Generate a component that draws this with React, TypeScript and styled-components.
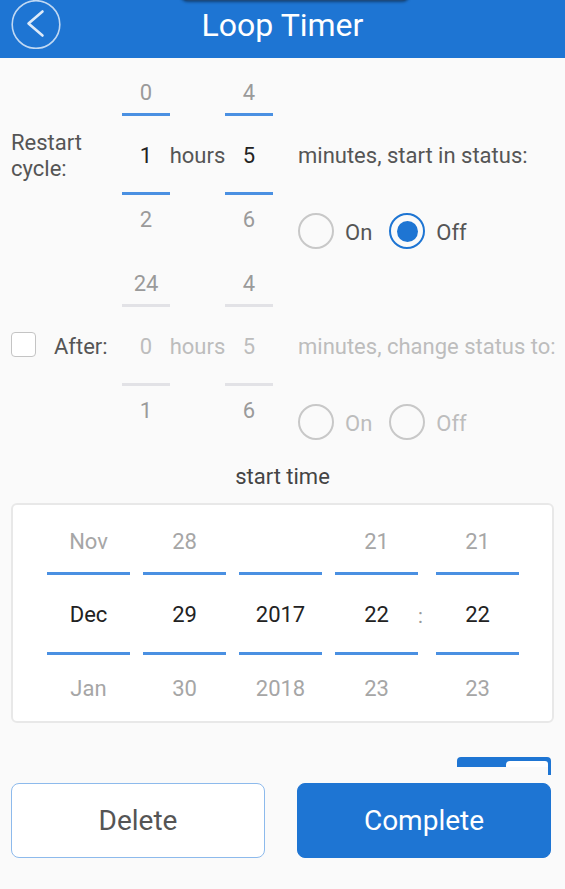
import React from "react";
import styled, { createGlobalStyle } from "styled-components";

const BLUE = "#1e75d3";
const LINE = "#4a90e2";
const LINE_OFF = "#e2e2e6";

const GlobalStyle = createGlobalStyle`
  body {
    margin: 0;
    background: #fafafa;
    font-family: Roboto, "Noto Sans", "Liberation Sans", sans-serif;
  }
`;

const Page = styled.div`
  position: relative;
  width: 565px;
  min-height: 889px;
  overflow: hidden;
  background: #fafafa;
`;

const Header = styled.header`
  position: relative;
  height: 58px;
  box-sizing: border-box;
  padding: 0 11px 9px;
  background: ${BLUE};
  display: grid;
  grid-template-columns: 50px 1fr 50px;
  align-items: center;
`;

const TopShade = styled.div`
  position: absolute;
  left: 180px;
  top: -12px;
  width: 230px;
  height: 13px;
  border-radius: 0 0 8px 8px;
  background: #1c4a7e;
  box-shadow: 0 1px 3px rgba(0, 0, 0, 0.45);
`;

const BackButton = styled.button`
  width: 50px;
  height: 49px;
  padding: 0;
  border: 0;
  background: none;
  display: block;
`;

const Title = styled.h1`
  margin: 0;
  text-align: center;
  color: #fff;
  font-size: 32px;
  font-weight: 400;
`;

const CycleRow = styled.div<{ $top: number }>`
  display: flex;
  align-items: flex-start;
  height: 173px;
  margin-top: ${(p) => p.$top}px;
  padding-left: 11px;
  font-size: 22px;
`;

const Column = styled.div<{ $w?: number; $gap?: number }>`
  display: flex;
  flex-direction: column;
  width: ${(p) => (p.$w ? `${p.$w}px` : "auto")};
  margin-left: ${(p) => p.$gap ?? 0}px;
  flex-shrink: 0;
  & > * {
    flex-shrink: 0;
  }
`;

const Spacer = styled.div`
  height: 43px;
`;

const EndCell = styled.div<{ $h: number; $color: string }>`
  height: ${(p) => p.$h}px;
  box-sizing: border-box;
  padding-top: ${(p) => (p.$h === 43 ? 2 : 0)}px;
  display: flex;
  align-items: center;
  justify-content: center;
  color: ${(p) => p.$color};
`;

const MidCell = styled.div<{ $line?: string; $color: string; $center?: boolean }>`
  height: 82px;
  box-sizing: border-box;
  padding-top: 3px;
  border-top: 3px solid ${(p) => p.$line ?? "transparent"};
  border-bottom: 3px solid ${(p) => p.$line ?? "transparent"};
  display: flex;
  align-items: center;
  justify-content: ${(p) => (p.$center ? "center" : "flex-start")};
  color: ${(p) => p.$color};
  white-space: nowrap;
`;

const TwoLine = styled.span`
  line-height: 25.5px;
  white-space: normal;
`;

const Checkbox = styled.span`
  width: 25px;
  height: 25px;
  box-sizing: border-box;
  margin: -4px 18px 0 0;
  border: 1.5px solid #c4c4c4;
  border-radius: 4px;
  background: #fff;
`;

const RadioGroup = styled.div`
  display: flex;
  align-items: center;
  margin-top: 18px;
`;

const RadioCircle = styled.span<{ $checked?: boolean }>`
  width: 36px;
  height: 36px;
  box-sizing: border-box;
  border-radius: 50%;
  border: 2px solid ${(p) => (p.$checked ? BLUE : "#c8c8c8")};
  display: flex;
  align-items: center;
  justify-content: center;
  &::after {
    content: "";
    width: 21px;
    height: 21px;
    border-radius: 50%;
    background: ${BLUE};
    display: ${(p) => (p.$checked ? "block" : "none")};
  }
`;

const RadioText = styled.span<{ $color: string; $after: number }>`
  margin: 2px ${(p) => p.$after}px 0 11px;
  color: ${(p) => p.$color};
`;

const SectionTitle = styled.div`
  margin-top: 30px;
  height: 26px;
  line-height: 26px;
  text-align: center;
  font-size: 22px;
  color: #444;
`;

const DateCard = styled.div`
  margin: 13px 11px 0;
  padding: 5px 0 0 34px;
  border: 2px solid #e8e8e8;
  border-radius: 6px;
  background: #fff;
  display: flex;
  gap: 13px;
  font-size: 22px;
`;

const DateColumn = styled.div`
  width: 83px;
  display: flex;
  flex-direction: column;
  text-align: center;
`;

const DateCell = styled.div<{ $h: number; $color: string; $line?: boolean }>`
  height: ${(p) => p.$h}px;
  box-sizing: border-box;
  padding-top: ${(p) => (p.$line ? 2 : 0)}px;
  border-top: ${(p) => (p.$line ? `3px solid ${LINE}` : "none")};
  border-bottom: ${(p) => (p.$line ? `3px solid ${LINE}` : "none")};
  display: flex;
  align-items: center;
  justify-content: center;
  color: ${(p) => p.$color};
`;

const Colon = styled.div`
  width: 5px;
  margin-left: -13px;
  padding-top: 64px;
  height: 83px;
  display: flex;
  align-items: center;
  font-size: 20px;
  color: #999;
`;

const TabWrap = styled.div`
  display: flex;
  justify-content: flex-end;
  margin: 34px 14px 0 0;
`;

const Tab = styled.div`
  position: relative;
  width: 94px;
  height: 10px;
  box-sizing: border-box;
  padding: 4px 3px 0 0;
  border-radius: 4px 4px 0 0;
  background: ${BLUE};
  display: flex;
  justify-content: flex-end;
  &::after {
    content: "";
    position: absolute;
    right: 0;
    top: 10px;
    width: 3px;
    height: 8px;
    background: ${BLUE};
  }
`;

const TabKnob = styled.span`
  width: 42px;
  height: 6px;
  border-radius: 4px 3px 0 0;
  background: #fff;
`;

const ButtonBar = styled.div`
  display: flex;
  gap: 32px;
  margin-top: 16px;
  padding: 0 14px 0 11px;
`;

const ActionButton = styled.button<{ $primary?: boolean }>`
  flex: 1;
  height: 75px;
  border-radius: 8px;
  border: 1.5px solid ${(p) => (p.$primary ? BLUE : "#8dbaec")};
  background: ${(p) => (p.$primary ? BLUE : "#fff")};
  color: ${(p) => (p.$primary ? "#fff" : "#555")};
  font-family: inherit;
  font-size: 28px;
`;

const MUTED = "#9a9a9a";

interface PickerProps {
  values: [string, string, string];
  disabled?: boolean;
}

const Picker: React.FC<PickerProps> = ({ values, disabled }) => (
  <Column $w={48}>
    <EndCell $h={43} $color={MUTED}>
      {values[0]}
    </EndCell>
    <MidCell
      $center
      $line={disabled ? LINE_OFF : LINE}
      $color={disabled ? "#bdbdbd" : "#222"}
    >
      {values[1]}
    </MidCell>
    <EndCell $h={48} $color={MUTED}>
      {values[2]}
    </EndCell>
  </Column>
);

const Radios: React.FC<{ checked?: "on" | "off"; disabled?: boolean }> = ({
  checked,
  disabled,
}) => {
  const color = disabled ? "#bdbdbd" : "#555";
  return (
    <RadioGroup>
      <RadioCircle $checked={checked === "on"} />
      <RadioText $color={color} $after={17}>
        On
      </RadioText>
      <RadioCircle $checked={checked === "off"} />
      <RadioText $color={color} $after={0}>
        Off
      </RadioText>
    </RadioGroup>
  );
};

const dateColumns = [
  ["Nov", "Dec", "Jan"],
  ["28", "29", "30"],
  ["", "2017", "2018"],
  ["21", "22", "23"],
  ["21", "22", "23"],
];

const BackIcon = () => (
  <svg width="50" height="49" viewBox="0 0 50 49">
    <circle
      cx="25"
      cy="24.5"
      r="23.8"
      fill="none"
      stroke="rgba(255,255,255,0.72)"
      strokeWidth="1.6"
    />
    <path
      d="M31.5 11.5 L17.5 23.5 L31.5 35.5"
      fill="none"
      stroke="rgba(255,255,255,0.85)"
      strokeWidth="2.6"
      strokeLinecap="round"
      strokeLinejoin="round"
    />
  </svg>
);

const App: React.FC = () => {
  return (
    <Page>
      <GlobalStyle />
      <Header>
        <TopShade />
        <BackButton aria-label="back">
          <BackIcon />
        </BackButton>
        <Title>Loop Timer</Title>
        <span />
      </Header>

      <CycleRow $top={12}>
        <Column $w={111}>
          <Spacer />
          <MidCell $color="#555">
            <TwoLine>
              Restart
              <br />
              cycle:
            </TwoLine>
          </MidCell>
        </Column>
        <Picker values={["0", "1", "2"]} />
        <Column $w={55}>
          <Spacer />
          <MidCell $center $color="#555">
            hours
          </MidCell>
        </Column>
        <Picker values={["4", "5", "6"]} />
        <Column $gap={25}>
          <Spacer />
          <MidCell $color="#555">minutes, start in status:</MidCell>
          <Radios checked="off" />
        </Column>
      </CycleRow>

      <CycleRow $top={18}>
        <Column $w={111}>
          <Spacer />
          <MidCell $color="#555">
            <Checkbox />
            After:
          </MidCell>
        </Column>
        <Picker values={["24", "0", "1"]} disabled />
        <Column $w={55}>
          <Spacer />
          <MidCell $center $color="#bdbdbd">
            hours
          </MidCell>
        </Column>
        <Picker values={["4", "5", "6"]} disabled />
        <Column $gap={25}>
          <Spacer />
          <MidCell $color="#bdbdbd">minutes, change status to:</MidCell>
          <Radios disabled />
        </Column>
      </CycleRow>

      <SectionTitle>start time</SectionTitle>

      <DateCard>
        {dateColumns.map((col, i) => (
          <React.Fragment key={i}>
            {i === 4 && <Colon>:</Colon>}
            <DateColumn>
              <DateCell $h={62} $color="#a6a6a6">
                {col[0]}
              </DateCell>
              <DateCell $h={83} $color="#222" $line>
                {col[1]}
              </DateCell>
              <DateCell $h={66} $color="#a6a6a6">
                {col[2]}
              </DateCell>
            </DateColumn>
          </React.Fragment>
        ))}
      </DateCard>

      <TabWrap>
        <Tab>
          <TabKnob />
        </Tab>
      </TabWrap>

      <ButtonBar>
        <ActionButton>Delete</ActionButton>
        <ActionButton $primary>Complete</ActionButton>
      </ButtonBar>
    </Page>
  );
};

export default App;
